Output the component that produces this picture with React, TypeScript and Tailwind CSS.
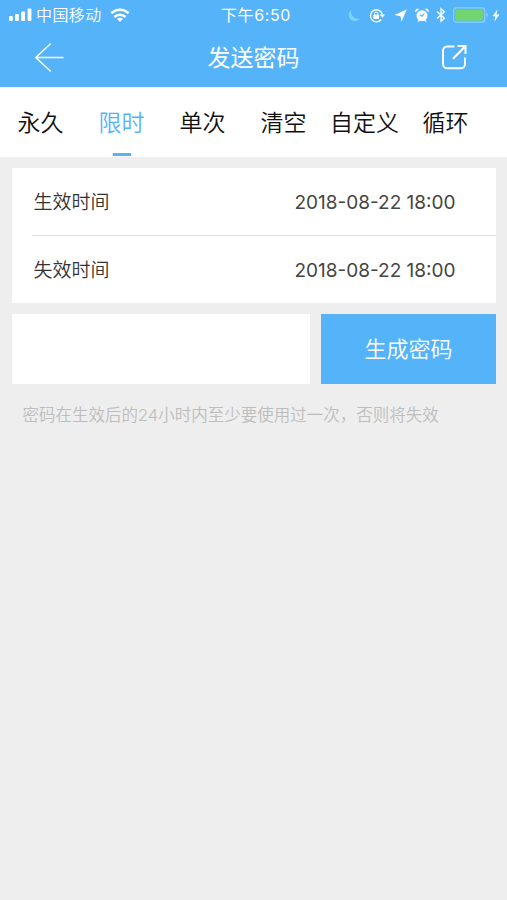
import { useState } from "react";

import clsx from "clsx";

const TABS = ["永久", "限时", "单次", "清空", "自定义", "循环"];

const TIMES = [
  { label: "生效时间", value: "2018-08-22 18:00" },
  { label: "失效时间", value: "2018-08-22 18:00" },
];

function StatusBar() {
  return (
    <div className="grid h-[30px] grid-cols-[1fr_auto_1fr] items-center pl-[9px] pr-[7px]">
      {/* Signal, carrier, wifi */}
      <div className="flex items-center">
        <svg width="23" height="14" viewBox="0 0 23 14" fill="currentColor">
          <rect x="0" y="8" width="3.8" height="5" rx="1" />
          <rect x="6" y="6" width="3.8" height="7" rx="1" />
          <rect x="12.2" y="3.5" width="3.8" height="9.5" rx="1" />
          <rect x="18.6" y="0.5" width="3.8" height="12.5" rx="1" />
        </svg>
        <span className="ml-[4px] text-[16px] font-[350] leading-[30px] tracking-[0.4px]">中国移动</span>
        <svg className="ml-[8px]" width="20" height="14" viewBox="0 0 20 14">
          <g fill="none" stroke="currentColor" strokeWidth="2.6">
            <path d="M1.3 5.3a12.6 12.6 0 0 1 17.4 0" />
            <path d="M4.5 9a7.9 7.9 0 0 1 11 0" />
          </g>
          <path d="M10 13.8 7 11a4.5 4.5 0 0 1 6 0z" fill="currentColor" />
        </svg>
      </div>

      <span className="pl-[3px] text-[16px] leading-[30px] tracking-[0.6px]">下午6:50</span>

      {/* System indicators */}
      <div className="flex items-center justify-end">
        <svg width="13" height="13" viewBox="0 0 13 13" fill="#7fd0ff">
          <path d="M3.6.8A6.2 6.2 0 1 0 12.3 9.1 6.5 6.5 0 0 1 3.600.8z" />
        </svg>
        <svg className="ml-[8px]" width="17" height="15" viewBox="0 0 17 15">
          <path
            d="M12.2 11.5A6 6 0 1 1 13.3 6.4"
            fill="none"
            stroke="currentColor"
            strokeWidth="1.3"
          />
          <path d="M10.6 6.4h5.6l-2.8 3.4z" fill="currentColor" />
          <rect x="4.4" y="6.7" width="5.6" height="4.3" rx=".6" fill="currentColor" />
          <path d="M5.6 7V5.6a1.6 1.6 0 0 1 3.2 0V7" fill="none" stroke="currentColor" />
        </svg>
        <svg className="ml-[8px]" width="13" height="13" viewBox="0 0 13 13" fill="currentColor">
          <path d="M12.7.5 7.6 12.7 6.5 7.3.4 6z" />
        </svg>
        <svg className="ml-[8px]" width="14" height="14" viewBox="0 0 14 14">
          <g fill="currentColor">
            <circle cx="7" cy="7.7" r="5.5" />
            <path d="M.5 4.3A2.6 2.6 0 0 1 4.3 1zM13.5 4.300A2.6 2.6 0 0 0 9.7 1z" />
            <path d="m2.3 13.5 1.5-2 1 .8-1.3 1.4zM11.7 13.5l-1.5-2-1 .8 1.3 1.4z" />
          </g>
          <path d="M9.300 5.600 7 8.200 4.800 6.800" fill="none" stroke="#55b3f9" strokeWidth="1.1" />
        </svg>
        <svg className="ml-[7px]" width="10" height="16" viewBox="0 0 10 16">
          <path
            d="m1 4.6 7.4 6.6L5 14.3V1.7l3.4 3.1L1 11.4"
            fill="none"
            stroke="currentColor"
            strokeWidth="1.3"
          />
        </svg>
        <svg className="ml-[7px]" width="36" height="16" viewBox="0 0 36 16">
          <rect x=".7" y=".9" width="31" height="14.2" rx="2.6" fill="none" stroke="#8dd0fb" strokeWidth="1.2" />
          <rect x="2.4" y="2.6" width="27.4" height="10.8" rx="1" fill="#71d66d" />
          <path d="M33.4 5.6a2.6 2.6 0 0 1 0 4.8z" fill="#8dd0fb" />
        </svg>
        <svg className="ml-[3px]" width="8" height="13" viewBox="0 0 8 13" fill="currentColor">
          <path d="M5.4.6.6 7.3h2.8L2.4 12.4l5-7H4.5z" />
        </svg>
      </div>
    </div>
  );
}

function NavBar() {
  return (
    <div className="flex h-[57px] items-center justify-between pb-[3px] pl-[34px] pr-[39px]">
      <button aria-label="返回" className="w-[32px]">
        <svg width="30" height="30" viewBox="0 0 30 30" fill="none" stroke="currentColor" strokeWidth="1.4">
          <path d="M29.5 15.5H1.8M16.8 1.5 1.8 15.5l15 14" />
        </svg>
      </button>
      <h1 className="pt-[2px] text-[23px] leading-[30px]">发送密码</h1>
      <button aria-label="分享" className="w-[27px]">
        <svg width="27" height="27" viewBox="0 0 27 27" fill="none" stroke="currentColor" strokeWidth="2">
          <path d="M13.5 2.5H6.2A4.2 4.2 0 0 0 2 6.7V20a4.2 4.2 0 0 0 4.2 4.2h13.6A4.2 4.2 0 0 0 24 20v-6.500" />
          <path d="M16.5 2h8v8M24.3 2.2 12 14.8" />
        </svg>
      </button>
    </div>
  );
}

export default function App() {
  const [active, setActive] = useState(1);

  return (
    <div className="min-h-screen w-full bg-[#eeeeee] font-['Inter','Noto_Sans_CJK_SC',sans-serif]">
      <header className="bg-[#55b3f9] text-white">
        <StatusBar />
        <NavBar />
      </header>

      {/* Password type tabs */}
      <nav className="flex h-[70px] bg-white">
        {TABS.map((tab, i) => (
          <button
            key={tab}
            onClick={() => setActive(i)}
            className={clsx(
              "flex w-[81px] flex-col items-center whitespace-nowrap text-[23px] font-[350] leading-[66px]",
              i === active ? "text-[#55b3f9]" : "text-[#111111]"
            )}
          >
            <span className="h-[66px] pt-[3px]">{tab}</span>
            {i === active && <span className="h-[3px] w-[18px] bg-[#55b3f9]" />}
          </button>
        ))}
      </nav>

      <main className="pl-3 pr-[11px] pt-[11px]">
        <div className="divide-y divide-[#dedede] bg-white pl-5">
          {TIMES.map(({ label, value }) => (
            <div
              key={label}
              className="flex h-[68px] items-center justify-between pl-[1.5px] pr-[40.5px] pt-[3px] text-[19px] text-[#444444] last:h-[67px]"
            >
              <span className="font-[350] text-[#333333]">{label}</span>
              <span>{value}</span>
            </div>
          ))}
        </div>

        <div className="mt-[11px] flex h-[70px] gap-[11px]">
          <input aria-label="密码" className="min-w-0 flex-1 bg-white px-5 text-[22px] outline-none" />
          <button className="w-[175px] bg-[#55b3f9] text-[22px] font-[350] text-white">生成密码</button>
        </div>

        <p className="mt-[18px] whitespace-nowrap pl-[10.5px] text-[16.5px] font-[350] leading-[26px] text-[#bdbdbd]">
          密码在生效后的24小时内至少要使用过一次，否则将失效
        </p>
      </main>
    </div>
  );
}
